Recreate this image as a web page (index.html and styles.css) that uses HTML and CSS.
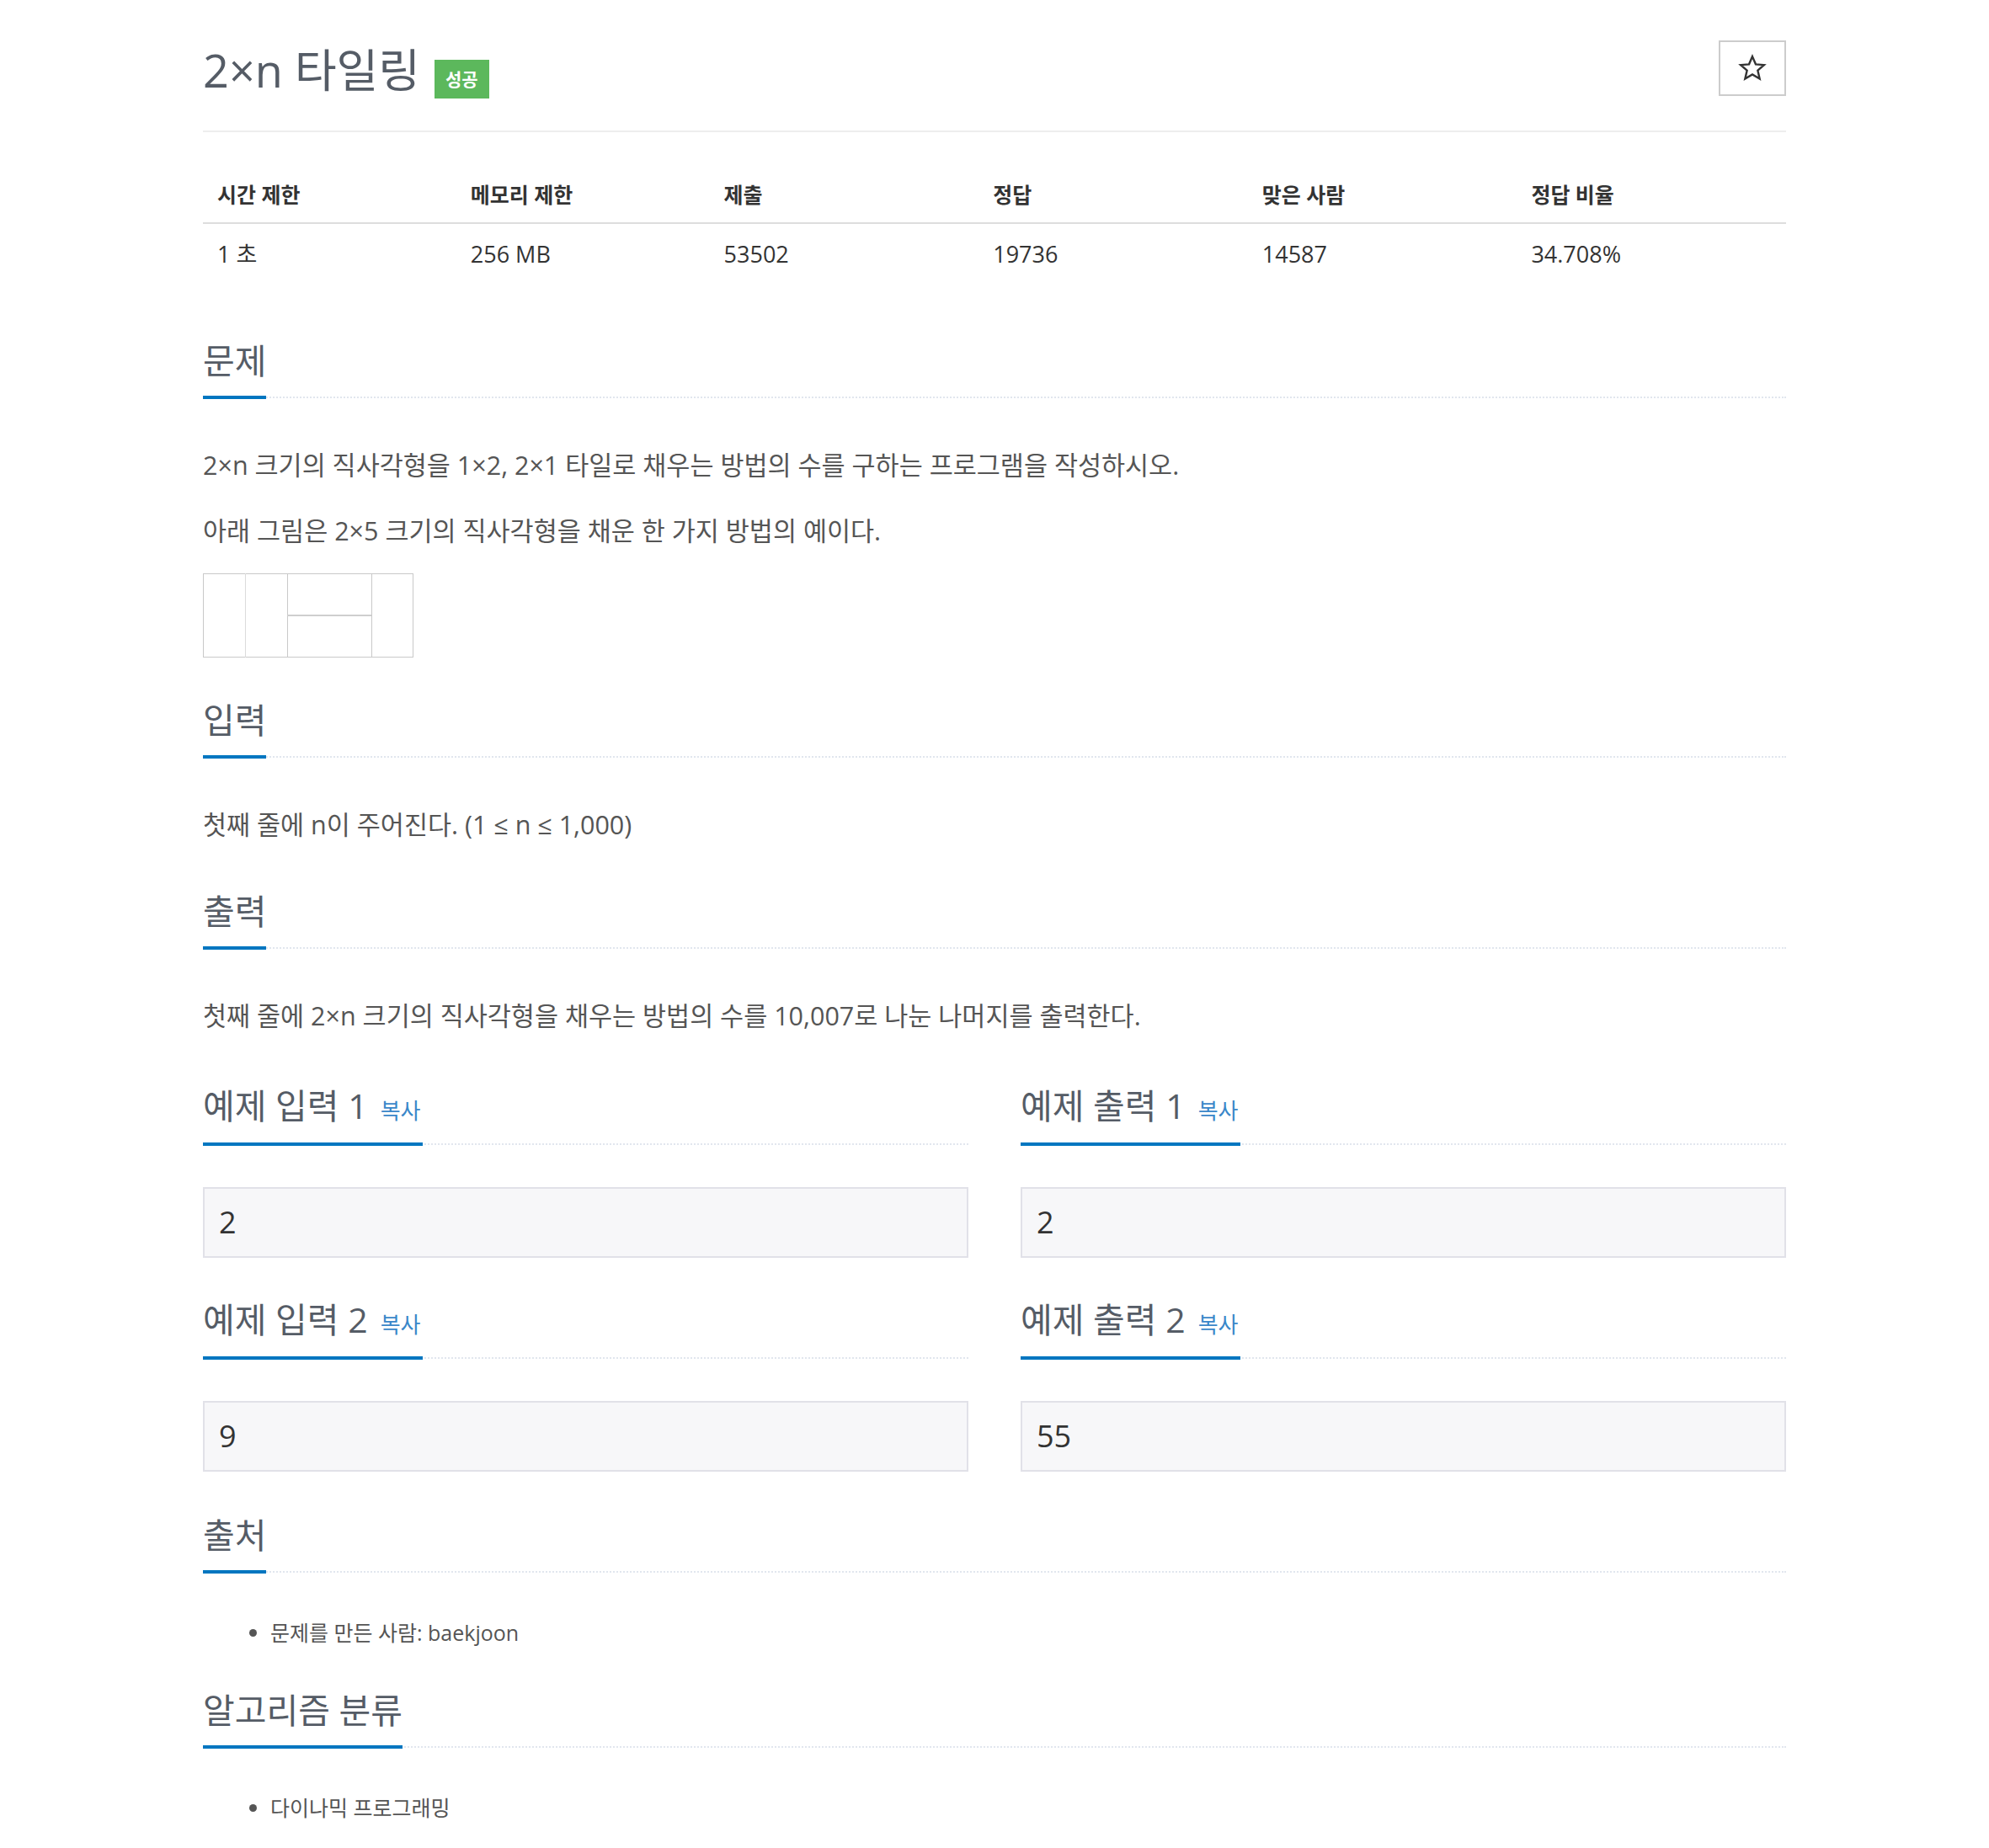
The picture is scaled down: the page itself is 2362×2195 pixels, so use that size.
FILE: index.html
```html
<!DOCTYPE html>
<html lang="ko">
<head>
<meta charset="utf-8">
<title>2×n 타일링</title>
<link rel="stylesheet" href="styles.css">
</head>
<body>
<div class="page">
  <header class="title-bar">
    <h1 class="title"><span class="title-text">2×n 타일링</span><span class="badge">성공</span></h1>
    <button class="star-btn" type="button" aria-label="즐겨찾기">
      <svg width="34" height="34" viewBox="0 0 24 24"><polygon points="12,2.2 14.8,8.7 21.8,9.3 16.5,13.9 18.1,20.8 12,17.2 5.9,20.8 7.5,13.9 2.2,9.3 9.2,8.7" fill="none" stroke="#333" stroke-width="1.7" stroke-linejoin="miter"/></svg>
    </button>
  </header>

  <table class="info">
    <colgroup>
      <col class="c16"><col class="c16"><col class="c17"><col class="c17"><col class="c17"><col class="c17">
    </colgroup>
    <thead>
      <tr><th>시간 제한</th><th>메모리 제한</th><th>제출</th><th>정답</th><th>맞은 사람</th><th>정답 비율</th></tr>
    </thead>
    <tbody>
      <tr><td>1 초</td><td>256 MB</td><td>53502</td><td>19736</td><td>14587</td><td>34.708%</td></tr>
    </tbody>
  </table>

  <section class="sec sec-first">
    <div class="headline"><h2>문제</h2></div>
    <div class="sec-text">
      <p>2×n 크기의 직사각형을 1×2, 2×1 타일로 채우는 방법의 수를 구하는 프로그램을 작성하시오.</p>
      <p class="before-fig">아래 그림은 2×5 크기의 직사각형을 채운 한 가지 방법의 예이다.</p>
      <div class="fig">
        <svg width="250" height="100" viewBox="0 0 250 100">
          <rect x="0.5" y="0.5" width="249" height="99" fill="#fff" stroke="#c9c9c9" stroke-width="1"/>
          <line x1="50.5" y1="0" x2="50.5" y2="100" stroke="#dcdcdc" stroke-width="1"/>
          <line x1="100.5" y1="0" x2="100.5" y2="100" stroke="#c9c9c9" stroke-width="1"/>
          <line x1="200.5" y1="0" x2="200.5" y2="100" stroke="#c9c9c9" stroke-width="1"/>
          <line x1="100" y1="50" x2="200" y2="50" stroke="#cfcfcf" stroke-width="2"/>
        </svg>
      </div>
    </div>
  </section>

  <section class="sec">
    <div class="headline"><h2>입력</h2></div>
    <div class="sec-text">
      <p class="last">첫째 줄에 n이 주어진다. (1 ≤ n ≤ 1,000)</p>
    </div>
  </section>

  <section class="sec">
    <div class="headline"><h2>출력</h2></div>
    <div class="sec-text">
      <p class="last">첫째 줄에 2×n 크기의 직사각형을 채우는 방법의 수를 10,007로 나눈 나머지를 출력한다.</p>
    </div>
  </section>

  <div class="sample-row">
    <section class="sample-col">
      <div class="headline"><h2>예제 입력 1<span class="copy">복사</span></h2></div>
      <pre class="sample">2</pre>
    </section>
    <section class="sample-col">
      <div class="headline"><h2>예제 출력 1<span class="copy">복사</span></h2></div>
      <pre class="sample">2</pre>
    </section>
  </div>

  <div class="sample-row sample-row-next">
    <section class="sample-col">
      <div class="headline"><h2>예제 입력 2<span class="copy">복사</span></h2></div>
      <pre class="sample">9</pre>
    </section>
    <section class="sample-col">
      <div class="headline"><h2>예제 출력 2<span class="copy">복사</span></h2></div>
      <pre class="sample">55</pre>
    </section>
  </div>

  <section class="sec">
    <div class="headline"><h2>출처</h2></div>
    <ul class="list">
      <li>문제를 만든 사람: baekjoon</li>
    </ul>
  </section>

  <section class="sec sec-after-list">
    <div class="headline"><h2>알고리즘 분류</h2></div>
    <ul class="list">
      <li>다이나믹 프로그래밍</li>
    </ul>
  </section>
</div>
</body>
</html>
```

FILE: styles.css
```css
html, body {
  margin: 0;
  padding: 0;
  background: #ffffff;
}

body {
  font-family: "Open Sans", "Noto Sans CJK KR", sans-serif;
  color: #555555;
}

.page {
  width: 1880px;
  margin: 0 auto;
  display: flex;
  flex-direction: column;
}

/* ---------- title ---------- */
.title-bar {
  display: flex;
  justify-content: space-between;
  align-items: flex-start;
  padding: 48px 0 37px;
  border-bottom: 2px solid #eeeeee;
}

.title {
  display: flex;
  align-items: flex-start;
  margin: 0;
  font-size: 54px;
  line-height: 70px;
  font-weight: 400;
  color: #555c66;
}

.badge {
  margin: 23px 0 0 17px;
  height: 46px;
  line-height: 46px;
  padding: 0 13px;
  background: #5cb85c;
  color: #ffffff;
  font-size: 21px;
  font-weight: 700;
}

.star-btn {
  width: 80px;
  height: 66px;
  margin: 0;
  padding: 0;
  border: 2px solid #cccccc;
  background: #ffffff;
  display: flex;
  align-items: center;
  justify-content: center;
}

.star-btn svg {
  display: block;
}

/* ---------- info table ---------- */
.info {
  width: 100%;
  table-layout: fixed;
  border-collapse: separate;
  border-spacing: 0;
  margin-top: 41px;
  color: #333333;
}

.c16 { width: 16%; }
.c17 { width: 17%; }

.info th {
  padding: 0 17px;
  line-height: 66px;
  text-align: left;
  font-size: 25px;
  font-weight: 700;
  border-bottom: 2px solid #dddddd;
}

.info td {
  padding: 0 17px;
  line-height: 72px;
  font-size: 27px;
}

/* ---------- sections ---------- */
.sec {
  display: flow-root;
  margin-top: 48px;
}

.sec-first {
  margin-top: 64px;
}

.sec-after-list {
  margin-top: 45px;
}

.headline {
  display: flex;
  border-bottom: 2px dotted #e1e6ee;
  margin-bottom: 50px;
}

.headline h2 {
  margin: 0 0 -3px;
  padding-bottom: 16px;
  border-bottom: 4px solid #0076c0;
  font-size: 41px;
  line-height: 52px;
  font-weight: 400;
  color: #555c66;
}

.sample-col .headline h2 {
  padding-top: 4px;
  padding-bottom: 18px;
}

.copy {
  margin-left: 15px;
  padding-right: 3px;
  font-size: 26px;
  line-height: 1;
  color: #3a87c9;
}

.sec-text {
  padding-top: 6px;
}

.sec-text p {
  margin: 0 0 32px;
  font-size: 30.5px;
  line-height: 46px;
}

.sec-text p.last {
  margin-bottom: 6px;
}

.fig {
  margin-top: -4px;
  line-height: 0;
}

.fig svg {
  display: block;
}

/* ---------- samples ---------- */
.sample-row {
  display: grid;
  grid-template-columns: 1fr 1fr;
  column-gap: 62px;
  margin-top: 48px;
}

.sample-row-next {
  margin-top: 42px;
}

.sample {
  margin: 0 0 1px;
  padding: 15px 17px;
  background: #f7f7f9;
  border: 2px solid #e1e1e8;
  font-family: "Open Sans", "Noto Sans CJK KR", sans-serif;
  font-size: 36px;
  line-height: 50px;
  color: #333333;
}

/* ---------- lists ---------- */
.list {
  margin: 0;
  padding-left: 80px;
  font-size: 25px;
  line-height: 42px;
  color: #555555;
}
```
